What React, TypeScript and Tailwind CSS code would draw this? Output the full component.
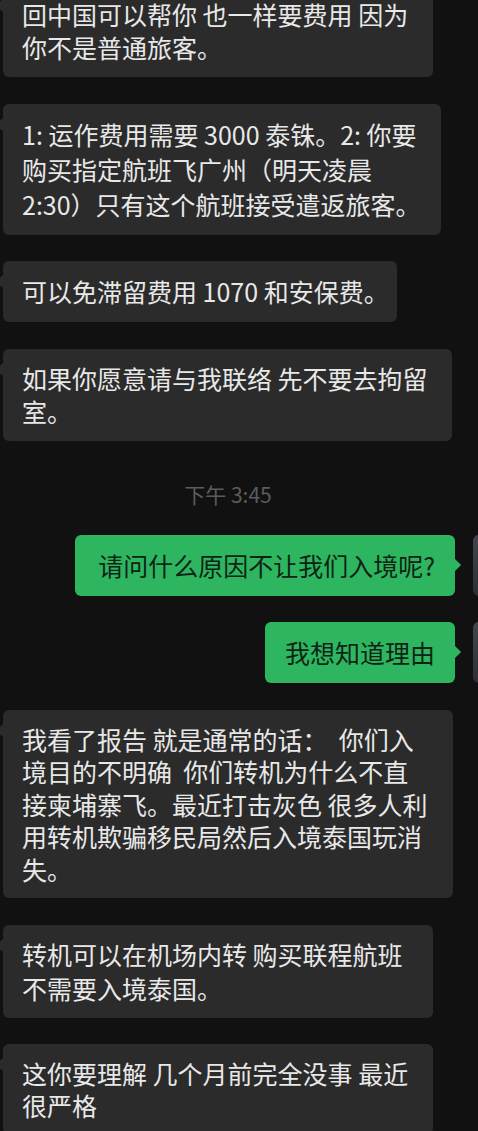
import React from "react";

type Msg = {
  side: "left" | "right";
  lines: string[];
  wrap: string; // margin-top + width
  lead: string;
};

const MESSAGES_TOP: Msg[] = [
  {
    side: "left",
    lines: ["回中国可以帮你 也一样要费用 因为", "你不是普通旅客。"],
    wrap: "w-[430px]",
    lead: "leading-[33px]",
  },
  {
    side: "left",
    lines: ["1: 运作费用需要 3000 泰铢。2: 你要", "购买指定航班飞广州（明天凌晨", "2:30）只有这个航班接受遣返旅客。"],
    wrap: "mt-[27px] w-[438px]",
    lead: "leading-[35px]",
  },
  {
    side: "left",
    lines: ["可以免滞留费用 1070 和安保费。"],
    wrap: "mt-[26px] w-[394px]",
    lead: "leading-[35px]",
  },
  {
    side: "left",
    lines: ["如果你愿意请与我联络 先不要去拘留", "室。"],
    wrap: "mt-[27px] w-[449px]",
    lead: "leading-[33px]",
  },
];

const MESSAGES_MINE: Msg[] = [
  {
    side: "right",
    lines: ["请问什么原因不让我们入境呢?"],
    wrap: "mt-[28px] w-[380px]",
    lead: "leading-[35px]",
  },
  {
    side: "right",
    lines: ["我想知道理由"],
    wrap: "mt-[26px] w-[190px]",
    lead: "leading-[35px]",
  },
];

const MESSAGES_BOTTOM: Msg[] = [
  {
    side: "left",
    lines: [
      "我看了报告 就是通常的话：  你们入",
      "境目的不明确  你们转机为什么不直",
      "接柬埔寨飞。最近打击灰色 很多人利",
      "用转机欺骗移民局然后入境泰国玩消",
      "失。",
    ],
    wrap: "mt-[27px] w-[450px]",
    lead: "leading-[32.4px]",
  },
  {
    side: "left",
    lines: ["转机可以在机场内转 购买联程航班", "不需要入境泰国。"],
    wrap: "mt-[27px] w-[430px]",
    lead: "leading-[33.5px]",
  },
  {
    side: "left",
    lines: ["这你要理解 几个月前完全没事 最近", "很严格"],
    wrap: "mt-[26px] w-[430px]",
    lead: "leading-[32px]",
  },
];

function Bubble({ msg }: { msg: Msg }) {
  const mine = msg.side === "right";
  const width = msg.wrap.replace(/mt-\[\d+px\]\s?/, "");
  const mt = msg.wrap.match(/mt-\[\d+px\]/)?.[0] ?? "";

  const body = (
    <div
      className={
        mine
          ? `relative shrink-0 ${width} rounded-[6px] bg-[#2eb55f] px-[20px] pt-[13px] pb-[13px] text-[#0e2416] ${msg.lead}`
          : `relative ${width} rounded-[6px] bg-[#2b2b2b] pl-[19px] pr-[10px] pt-[13px] pb-[13px] text-[#e8e8e8] ${msg.lead}`
      }
    >
      {mine ? (
        <span className="absolute -right-[4px] top-[25px] h-[10px] w-[10px] rotate-45 bg-[#2eb55f]" />
      ) : (
        <span className="absolute -left-[5px] top-[16px] h-[9px] w-[9px] rotate-45 bg-[#2b2b2b]" />
      )}
      {msg.lines.map((l, i) => (
        <div key={i} className={`relative whitespace-pre ${mine ? "text-right" : ""}`}>
          {l}
        </div>
      ))}
    </div>
  );

  if (mine) {
    return (
      <div className={`flex items-start justify-end ${mt}`}>
        {body}
        <div className="ml-[18px] mr-[-55px] h-[61px] w-[60px] shrink-0 rounded-[6px] bg-gradient-to-b from-[#43464c] to-[#2c2f34]" />
      </div>
    );
  }
  return <div className={`ml-[3px] ${mt}`}>{body}</div>;
}

export default function App() {
  return (
    <div className="h-[1131px] w-[478px] overflow-hidden bg-[#111111] font-['Noto_Sans_CJK_SC','Noto_Sans',sans-serif] text-[25px]">
      <div className="-mt-[15px] flex flex-col">
        {MESSAGES_TOP.map((m, i) => (
          <Bubble key={`t${i}`} msg={m} />
        ))}

        {/* time divider sits a bit left of centre in the shot */}
        <div className="mt-[40px] pr-[22px] text-center text-[21px] leading-[26px] text-[#5c5c5c]">
          下午 3:45
        </div>

        {MESSAGES_MINE.map((m, i) => (
          <Bubble key={`m${i}`} msg={m} />
        ))}

        {MESSAGES_BOTTOM.map((m, i) => (
          <Bubble key={`b${i}`} msg={m} />
        ))}
      </div>
    </div>
  );
}
